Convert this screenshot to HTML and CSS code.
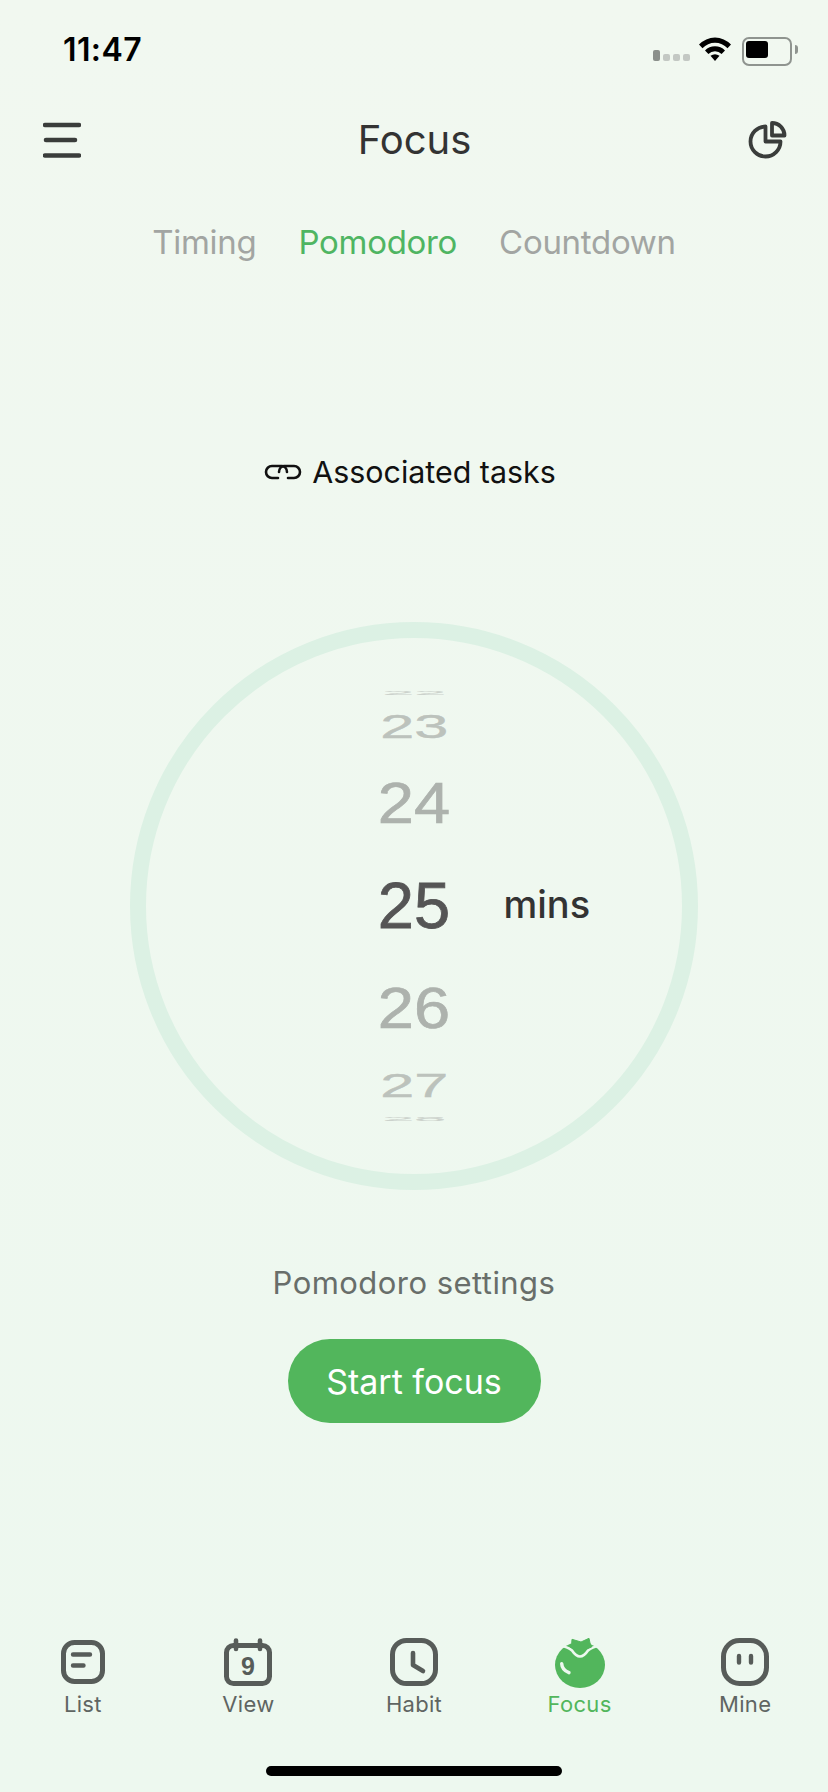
FILE: index.html
```html
<!DOCTYPE html>
<html lang="en">
<head>
    <meta charset="UTF-8">
    <meta name="viewport" content="width=device-width, initial-scale=1.0">
    <title>Focus</title>
    <link rel="stylesheet" href="styles.css">
</head>
<body>
    <div class="page">
        <!-- Status bar -->
        <div class="status-bar">
            <span class="time">11:47</span>
            <div class="status-icons">
                <div class="signal"><i class="on"></i><i></i><i></i><i></i></div>
                <svg class="wifi" width="32" height="24" viewBox="0 0 32 24">
                    <path d="M0 7.5 A22 22 0 0 1 32 7.5 L28.5 11.2 A17 17 0 0 0 3.5 11.2 Z" fill="#000"/>
                    <path d="M6 13.5 A14 14 0 0 1 26 13.5 L22.6 17 A9.5 9.5 0 0 0 9.4 17 Z" fill="#000"/>
                    <path d="M11.5 18.8 Q16 15.5 20.5 18.8 L16 24 Z" fill="#000"/>
                </svg>
                <div class="battery"><div class="battery-fill"></div></div>
                <div class="battery-nub"></div>
            </div>
        </div>

        <!-- Title bar -->
        <div class="nav-bar">
            <svg width="38" height="36" viewBox="0 0 38 36">
                <path d="M2 3 H36 M3 18 H32 M2 33.500 H36" stroke="#3a3d3b" stroke-width="4.6" stroke-linecap="round" fill="none"/>
            </svg>
            <h1>Focus</h1>
            <svg width="39" height="38" viewBox="0 0 39 38" fill="none" stroke="#3a3d3b" stroke-width="3.8" stroke-linejoin="round">
                <path d="M17.500 5.500 A15 15 0 1 0 32.500 20.500 H17.500 Z"/>
                <path d="M24 2 A12.500 12.500 0 0 1 36.500 14.500 H24 Z"/>
            </svg>
        </div>

        <!-- Mode tabs -->
        <div class="mode-tabs">
            <span>Timing</span>
            <span class="active">Pomodoro</span>
            <span>Countdown</span>
        </div>

        <div class="tasks">
            <svg width="38" height="16" viewBox="0 0 38 16" fill="none" stroke="#111" stroke-width="2.6" stroke-linecap="round">
                <path d="M14 14 H8 A6 6 0 0 1 8 2 H18 A6 6 0 0 1 23 8"/>
                <path d="M24 14 H30 A6 6 0 0 0 30 2 H20 A6 6 0 0 0 15 8"/>
            </svg>
            <span>Associated tasks</span>
        </div>

        <!-- Minute picker -->
        <div class="ring">
            <div class="wheel">
                <div class="num num-edge"><span>22</span></div>
                <div class="num num-far"><span>23</span></div>
                <div class="num num-near"><span>24</span></div>
                <div class="num num-current"><span>25</span></div>
                <div class="num num-near2"><span>26</span></div>
                <div class="num num-far2"><span>27</span></div>
                <div class="num num-edge2"><span>28</span></div>
            </div>
            <div class="unit">mins</div>
        </div>

        <div class="settings">Pomodoro settings</div>
        <button class="start-btn">Start focus</button>

        <!-- Bottom tabs -->
        <div class="tab-bar">
            <div class="tab">
                <svg width="48" height="48" viewBox="0 0 48 48" fill="none" stroke="#575c59" stroke-linecap="round">
                    <rect x="4.500" y="4.500" width="39" height="39" rx="11" stroke-width="5"/>
                    <path d="M14 16.500 H31 M14 27.500 H24.500" stroke-width="4.4"/>
                </svg>
                <span>List</span>
            </div>
            <div class="tab">
                <svg width="48" height="48" viewBox="0 0 48 48" fill="none" stroke="#575c59" stroke-linecap="round">
                    <rect x="2.500" y="7.500" width="43" height="38" rx="7" stroke-width="5"/>
                    <path d="M12 2.500 V11 M36 2.500 V11" stroke-width="4.6"/>
                    <text x="24" y="37" class="cal-day">9</text>
                </svg>
                <span>View</span>
            </div>
            <div class="tab">
                <svg width="48" height="48" viewBox="0 0 48 48" fill="none" stroke="#575c59" stroke-linecap="round" stroke-linejoin="round">
                    <rect x="2.500" y="2.500" width="43" height="43" rx="14" stroke-width="5"/>
                    <path d="M23 15 V27 L33 33" stroke-width="4.6"/>
                </svg>
                <span>Habit</span>
            </div>
            <div class="tab tab-active">
                <svg class="tomato" width="50" height="50" viewBox="0 0 50 50">
                    <ellipse cx="25" cy="27" rx="25" ry="23" fill="#52b65c"/>
                    <path d="M6 8 Q13 9 17 12.500 Q21 18.500 25 18.500 Q29 18.500 33 12.500 Q37 9 44 8" fill="none" stroke="#edf8ef" stroke-width="2.6"/>
                    <path d="M17 1.300 L26 4 L34 0.300 L35 5 L36.700 9 L30.700 11.300 L25 15.700 L20 11.300 L15 9 L16.700 5.500 Z" fill="#52b65c" stroke="#52b65c" stroke-width="1" stroke-linejoin="round"/>
                    <path d="M6.700 25.700 Q7 32 14 34.700" fill="none" stroke="#edf8ef" stroke-width="3.4" stroke-linecap="round"/>
                </svg>
                <span>Focus</span>
            </div>
            <div class="tab">
                <svg width="48" height="48" viewBox="0 0 48 48" fill="none" stroke="#575c59" stroke-linecap="round">
                    <rect x="2.500" y="2.500" width="43" height="43" rx="16" stroke-width="5"/>
                    <path d="M18 18 V24.500 M30 18 V24.500" stroke-width="4.4"/>
                </svg>
                <span>Mine</span>
            </div>
        </div>

        <div class="home-bar"></div>
    </div>
</body>
</html>
```

FILE: styles.css
```css
body {
    margin: 0;
    padding: 0;
    background: #f0f8ef;
    font-family: Inter, "Noto Sans", sans-serif;
    color: #333;
}
.page {
    width: 828px;
    height: 1792px;
    overflow: hidden;
    display: flex;
    flex-direction: column;
    align-items: center;
    background: linear-gradient(#f1f8f0, #edf8ef);
}

/* status bar */
.status-bar {
    align-self: stretch;
    height: 62px;
    padding: 36px 30px 0 63px;
    display: flex;
    justify-content: space-between;
}
.time {
    margin-top: 1px;
    font-size: 32px;
    line-height: 26px;
    font-weight: 600;
    letter-spacing: 0.4px;
    color: #000;
}
.status-icons {
    display: flex;
    align-items: flex-start;
}
.signal {
    display: flex;
    align-items: flex-end;
    gap: 3px;
    height: 11px;
    margin-top: 14px;
    margin-right: 9px;
}
.signal i {
    width: 7px;
    height: 7px;
    border-radius: 2px;
    background: #c3c8c3;
}
.signal i.on {
    height: 11px;
    background: #8b908b;
}
.wifi {
    margin-top: 1px;
}
.battery {
    width: 42px;
    height: 21px;
    margin-left: 11px;
    margin-top: 1px;
    border: 2px solid #8f948f;
    border-radius: 7px;
    padding: 2px;
}
.battery-fill {
    width: 22px;
    height: 17px;
    background: #000;
    border-radius: 3px;
}
.battery-nub {
    width: 3px;
    height: 9px;
    margin: 9px 0 0 3px;
    background: #8f948f;
    border-radius: 0 3px 3px 0;
}

/* title bar */
.nav-bar {
    width: 745px;
    margin: 22px 0 0 2px;
    height: 40px;
    display: flex;
    justify-content: space-between;
    align-items: center;
}
.nav-bar h1 {
    margin: 0;
    font-size: 40px;
    line-height: 40px;
    font-weight: 400;
    color: #333;
}

/* mode tabs */
.mode-tabs {
    margin-top: 62px;
    display: flex;
    gap: 42px;
    font-size: 33px;
    line-height: 40px;
    letter-spacing: -0.3px;
    color: #a2a5a2;
}
.mode-tabs .active {
    color: #4fb562;
}

.tasks {
    margin: 190px 8px 0 0;
    display: flex;
    align-items: center;
    gap: 10px;
    font-size: 30.4px;
    line-height: 40px;
    color: #111;
}

/* minute picker */
.ring {
    margin-top: 130px;
    width: 568px;
    height: 568px;
    box-sizing: border-box;
    border: 16px solid #dcf1e4;
    border-radius: 50%;
    display: grid;
    grid-template-columns: 1fr auto 1fr;
    padding-top: 51px;
}
.wheel {
    grid-column: 2;
    width: 73px;
    font-family: "Liberation Sans", Arial, sans-serif;
}
.num {
    display: flex;
    align-items: center;
    justify-content: center;
    overflow: hidden;
}
.num span {
    display: block;
    font-size: 65px;
    line-height: 64px;
    -webkit-text-stroke: 0.8px currentColor;
}
.num-edge { height: 8px; }
.num-far { height: 59px; }
.num-near { height: 95px; }
.num-current { height: 109px; }
.num-near2 { height: 98px; }
.num-far2 { height: 55px; }
.num-edge2 { height: 12px; }

.num-current span { color: #555; }
.num-near span, .num-near2 span {
    color: #adb2ad;
    transform: scaleY(0.87);
}
.num-far span, .num-far2 span {
    color: #bcc2bc;
    transform: scale(0.94, 0.52);
}
.num-edge span, .num-edge2 span {
    color: #ccd2cc;
    transform: scale(0.88, 0.09);
}
.unit {
    grid-column: 3;
    align-self: start;
    margin: 192px 0 0 53px;
    font-size: 38px;
    line-height: 46px;
    font-weight: 500;
    color: #333;
}

.settings {
    margin-top: 73px;
    font-size: 31px;
    line-height: 40px;
    letter-spacing: 0.45px;
    color: #686e6a;
}
.start-btn {
    margin-top: 36px;
    width: 253px;
    height: 84px;
    border: none;
    border-radius: 42px;
    background: #52b65c;
    color: white;
    font-family: inherit;
    font-size: 34px;
}

/* bottom tabs */
.tab-bar {
    margin-top: auto;
    width: 100%;
    display: flex;
}
.tab {
    flex: 1;
    display: flex;
    flex-direction: column;
    align-items: center;
    font-size: 22px;
    line-height: 28px;
    letter-spacing: 0.3px;
    color: #5f6562;
}
.tab svg {
    display: block;
}
.tab .tomato {
    margin-bottom: -2px;
}
.tab span {
    margin-top: 4px;
}
.tab-active {
    color: #52b65c;
}
.cal-day {
    font-family: "Liberation Sans", Arial, sans-serif;
    font-size: 25px;
    font-weight: 700;
    text-anchor: middle;
    fill: #575c59;
    stroke: none;
}
.home-bar {
    width: 296px;
    height: 10px;
    margin: 48px 0 16px;
    background: #000;
    border-radius: 5px;
}
```
